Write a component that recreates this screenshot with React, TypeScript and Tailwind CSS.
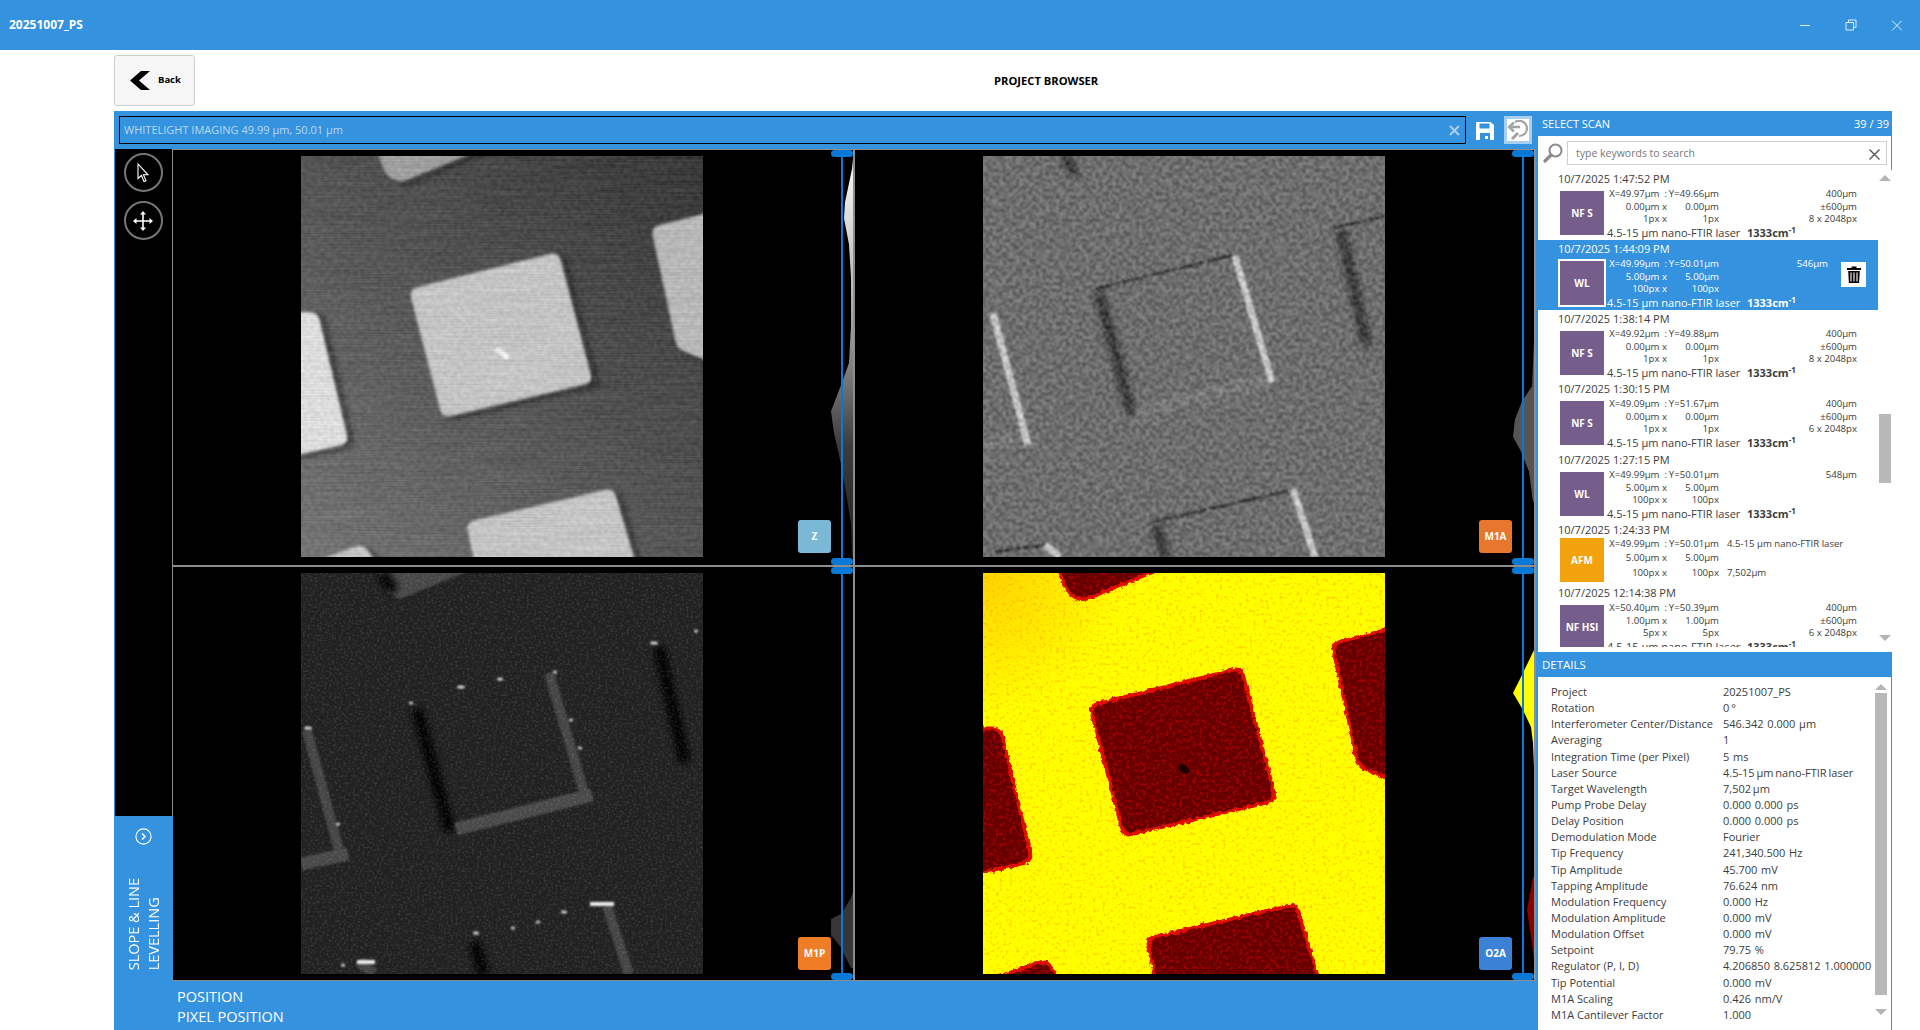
import React from 'react';

const FONT = "font-['Open_Sans','Noto_Sans',sans-serif]";

type Variant = 'z' | 'm1a' | 'm1p' | 'o2a';

// pillar outlines, in image pixels
const CENTER = '109,134 257,97 291,226 142,261';
const TOP = '74,-12 192,-12 99,26 86,19';
const RIGHT = '351,72 414,56 414,207 377,192';
const LEFT = '-12,157 16,157 47,287 -12,300';
const BOTTOM = '166,367 312,333 336,414 176,414';
const CORNER = '-8,414 62,389 80,414';
const ALL = [TOP, RIGHT, LEFT, BOTTOM, CORNER, CENTER];

type Edge = [number, number, number, number];

const DARK_EDGES: Edge[] = [
  [109, 136, 142, 259],
  [351, 74, 377, 190],
  [166, 369, 176, 401],
  [74, 0, 86, 19],
];
const TOP_EDGES: Edge[] = [
  [112, 133, 250, 99],
  [351, 72, 402, 60],
  [170, 366, 305, 335],
  [12, 396, 62, 389],
];
const BRIGHT_EDGES: Edge[] = [
  [252, 100, 289, 226],
  [10, 157, 45, 289],
  [310, 333, 332, 401],
  [62, 389, 77, 401],
];
const BOTTOM_EDGES: Edge[] = [
  [155, 256, 291, 222],
  [0, 291, 47, 281],
];

const DOTS: [number, number, number][] = [
  [160, 114, 4], [199, 106, 3], [110, 130, 2], [254, 99, 2], [270, 147, 2], [279, 175, 2],
  [353, 70, 4], [395, 58, 2], [7, 155, 4], [37, 251, 2], [263, 339, 3], [175, 360, 3],
  [42, 392, 2], [237, 349, 2], [212, 355, 2],
];

function Lines({ edges, color, width, dash }: { edges: Edge[]; color: string; width: number; dash?: string }) {
  return (
    <>
      {edges.map((e, i) => (
        <line key={i} x1={e[0]} y1={e[1]} x2={e[2]} y2={e[3]} stroke={color} strokeWidth={width} strokeDasharray={dash} />
      ))}
    </>
  );
}

function Noise({ id, freq, seed, matrix, soft = 0.6 }: { id: string; freq: string; seed: number; matrix: string; soft?: number }) {
  return (
    <filter id={id} x="0" y="0" width="100%" height="100%" colorInterpolationFilters="sRGB">
      <feTurbulence type="fractalNoise" baseFrequency={freq} numOctaves={3} seed={seed} />
      <feColorMatrix type="matrix" values={matrix} />
      <feGaussianBlur stdDeviation={soft} />
    </filter>
  );
}

function grayNoise(gain: number, alpha: number) {
  const g = gain;
  const o = (1 - gain) / 2;
  return `${g} 0 0 0 ${o} ${g} 0 0 0 ${o} ${g} 0 0 0 ${o} 0 0 0 0 ${alpha}`;
}

// microscope image drawn from the pillar outlines
function Sample({ variant }: { variant: Variant }) {
  const id = (n: string) => `${variant}-${n}`;
  return (
    <svg width="402" height="401" viewBox="0 0 402 401" className="block shrink-0">
      <defs>
        <linearGradient id={id('bg')} x1="1" y1="0" x2="0" y2="1">
          <stop offset="0" stopColor="#2d2d2d" />
          <stop offset="0.5" stopColor="#4f4f4f" />
          <stop offset="1" stopColor="#747474" />
        </linearGradient>
        <radialGradient id={id('tint')} cx="0" cy="0" r="0.35">
          <stop offset="0" stopColor="#ff9d00" stopOpacity="0.45" />
          <stop offset="1" stopColor="#ff9d00" stopOpacity="0" />
        </radialGradient>
        <filter id={id('b1')} x="-20%" y="-20%" width="140%" height="140%"><feGaussianBlur stdDeviation="1" /></filter>
        <filter id={id('b2')} x="-20%" y="-20%" width="140%" height="140%"><feGaussianBlur stdDeviation="2.6" /></filter>
        <filter id={id('b3')} x="-20%" y="-20%" width="140%" height="140%"><feGaussianBlur stdDeviation="3.5" /></filter>
        <filter id={id('round')} filterUnits="userSpaceOnUse" x="-30" y="-30" width="462" height="461" colorInterpolationFilters="sRGB">
          <feGaussianBlur stdDeviation="4" />
          <feComponentTransfer><feFuncA type="linear" slope="12" intercept="-5.5" /></feComponentTransfer>
          <feGaussianBlur stdDeviation="1.6" />
        </filter>
        <filter id={id('rough')} filterUnits="userSpaceOnUse" x="-30" y="-30" width="462" height="461" colorInterpolationFilters="sRGB">
          <feGaussianBlur stdDeviation="4" />
          <feComponentTransfer result="r"><feFuncA type="linear" slope="12" intercept="-5.5" /></feComponentTransfer>
          <feTurbulence type="fractalNoise" baseFrequency="0.22" numOctaves={2} seed={9} result="t" />
          <feDisplacementMap in="r" in2="t" scale="5" xChannelSelector="R" yChannelSelector="G" />
          <feGaussianBlur stdDeviation="0.6" />
        </filter>
        <Noise id={id('n')} freq="0.3" seed={7} matrix={grayNoise(3, 0.24)} soft={0.9} />
        <Noise id={id('s')} freq="0.012 0.7" seed={4} matrix={grayNoise(2.2, 0.05)} soft={0.2} />
        <Noise id={id('w')} freq="0.42" seed={3} matrix="0 0 0 0 1 0 0 0 0 1 0 0 0 0 1 3.2 0 0 0 -1.5" />
        <Noise id={id('o')} freq="0.3" seed={11} matrix="0 0 0 0 1 0 0 0 0 0.62 0 0 0 0 0 5 0 0 0 -2.75" />
        <Noise id={id('r')} freq="0.3" seed={5} matrix="0 0 0 0 0.9 0 0 0 0 0 0 0 0 0 0 5 0 0 0 -2.5" />
        <clipPath id={id('c')}>
          {ALL.map((p, i) => <polygon key={i} points={p} />)}
        </clipPath>
      </defs>

      {variant === 'z' && (
        <>
          <rect width="402" height="401" fill={`url(#${id('bg')})`} />
          <g filter={`url(#${id('b3')})`}>
            {ALL.map((p, i) => <polygon key={i} points={p} fill="#0c0c0c" opacity="0.7" transform="translate(6 3)" />)}
          </g>
          <g filter={`url(#${id('round')})`}>
            {ALL.map((p, i) => {
              const c = p === LEFT ? '#ececec' : p === TOP ? '#a4a4a4' : p === RIGHT ? '#c2c2c2' : '#d0d0d0';
              return <polygon key={i} points={p} fill={c} stroke={c} strokeWidth="2" strokeLinejoin="round" />;
            })}
          </g>
          <line x1="195" y1="192" x2="207" y2="202" stroke="#fff" strokeWidth="5" filter={`url(#${id('b1')})`} />
          <rect width="402" height="401" filter={`url(#${id('n')})`} opacity="0.4" />
          <rect width="402" height="401" filter={`url(#${id('s')})`} />
        </>
      )}

      {variant === 'm1a' && (
        <>
          <rect width="402" height="401" fill="#696969" />
          <g filter={`url(#${id('b3')})`}>
            <g transform="translate(7 0)"><Lines edges={DARK_EDGES} color="#1c1c1c" width={10} /></g>
            <Lines edges={BOTTOM_EDGES} color="#8c8c8c" width={7} dash="12 8" />
          </g>
          <g filter={`url(#${id('b1')})`}>
            <Lines edges={TOP_EDGES} color="#1a1a1a" width={2.5} dash="26 3" />
            <Lines edges={BRIGHT_EDGES} color="#dadada" width={7} />
          </g>
          <rect width="402" height="401" filter={`url(#${id('n')})`} />
        </>
      )}

      {variant === 'm1p' && (
        <>
          <rect width="402" height="401" fill="#212121" />
          <g filter={`url(#${id('b1')})`}>
            <polygon points={TOP} fill="#474747" />
          </g>
          <g filter={`url(#${id('b3')})`}>
            <g transform="translate(7 0)"><Lines edges={DARK_EDGES} color="#000" width={12} /></g>
          </g>
          <g filter={`url(#${id('b1')})`}>
            <g transform="translate(-4 0)"><Lines edges={BRIGHT_EDGES} color="#444" width={10} /></g>
            <Lines edges={BOTTOM_EDGES} color="#4a4a4a" width={13} />
          </g>
          <rect width="402" height="401" filter={`url(#${id('w')})`} opacity="0.1" />
          <g filter="blur(0.9px)">
            {DOTS.map((d, i) => <ellipse key={i} cx={d[0]} cy={d[1]} rx={d[2]} ry="1.6" fill="#dedede" />)}
            <rect x="289" y="329" width="24" height="4" fill="#f0f0f0" />
            <rect x="56" y="387" width="18" height="4" fill="#f0f0f0" />
          </g>
        </>
      )}

      {variant === 'o2a' && (
        <>
          <rect width="402" height="401" fill="#ffff00" />
          <rect width="402" height="401" fill={`url(#${id('tint')})`} />
          <rect width="402" height="401" filter={`url(#${id('o')})`} opacity="0.4" />
          <g filter={`url(#${id('rough')})`}>
            {ALL.map((p, i) => <polygon key={i} points={p} fill="#e01000" stroke="#e01000" strokeWidth="7" strokeLinejoin="round" />)}
          </g>
          <g filter={`url(#${id('rough')})`}>
            {ALL.map((p, i) => <polygon key={i} points={p} fill="#640000" />)}
          </g>
          <g clipPath={`url(#${id('c')})`}>
            <rect width="402" height="401" filter={`url(#${id('r')})`} opacity="0.45" />
          </g>
          <ellipse cx="201" cy="196" rx="6" ry="4" fill="#1c0000" transform="rotate(35 201 196)" />
        </>
      )}
    </svg>
  );
}

// the height histogram at the right edge of every image
function Profile({ variant }: { variant: Variant }) {
  const gid = `${variant}-hist`;
  return (
    <svg className="absolute right-0 top-0 h-full w-[24px]" viewBox="0 0 24 413" preserveAspectRatio="none">
      <defs>
        <linearGradient id={gid} x1="0" y1="0" x2="0" y2="1">
          <stop offset="0.05" stopColor="#f0f0f0" />
          <stop offset="0.32" stopColor="#bbb" />
          <stop offset="0.55" stopColor="#777" />
          <stop offset="0.72" stopColor="#3c3c3c" />
          <stop offset="1" stopColor="#202020" />
        </linearGradient>
      </defs>
      {variant === 'z' && (
        <polygon fill={`url(#${gid})`} points="24,9 23,19 16,52 15,68 20,94 22,127 22,175 20,212 12,234 2,260 5,282 10,303 17,341 22,373 23,405 24,405" />
      )}
      {variant === 'm1a' && (
        <polygon fill="#555" points="24,190 22,235 12,250 5,268 3,285 11,300 19,320 23,350 24,350" />
      )}
      {variant === 'm1p' && (
        <polygon fill="#363636" points="24,325 22,331 12,347 2,352 2,368 11,379 22,401 24,401" />
      )}
      {variant === 'o2a' && (
        <>
          <polygon fill="#ffff00" points="24,83 11,110 3,126 13,143 21,160 23,176 24,200" />
          <polygon fill="#8b0000" points="24,310 23,310 17,343 21,370 24,393" />
        </>
      )}
    </svg>
  );
}

function Cell({ variant, label, badgeColor, bottomClass, cellClass }: { variant: Variant; label: string; badgeColor: string; bottomClass: string; cellClass: string }) {
  return (
    <div className={`relative bg-black pl-[128px] pt-[6px] ${cellClass}`}>
      <Sample variant={variant} />
      <Profile variant={variant} />
      <div className="absolute right-[10px] top-0 h-full w-[2px] bg-[#0a78d7]" />
      <div className="absolute right-0 top-0 h-[7px] w-[22px] rounded-full bg-[#0a78d7]" />
      <div className="absolute bottom-0 right-0 h-[7px] w-[22px] rounded-full bg-[#0a78d7]" />
      <div className={`absolute right-[22px] flex h-[33px] w-[33px] items-center justify-center rounded-[3px] text-[10px] font-bold text-white ${bottomClass} ${badgeColor}`}>
        {label}
      </div>
    </div>
  );
}

type Scan = {
  date: string;
  kind: string;
  x: string;
  y: string;
  w: string;
  h: string;
  pw: string;
  ph: string;
  right: string[];
  selected?: boolean;
  tall?: boolean;
};

const SCANS: Scan[] = [
  { date: '10/7/2025 1:47:52 PM', kind: 'NF S', x: '49.97', y: '49.66', w: '0.00µm', h: '0.00µm', pw: '1px', ph: '1px', right: ['400µm', '±600µm', '8 x 2048px'] },
  { date: '10/7/2025 1:44:09 PM', kind: 'WL', x: '49.99', y: '50.01', w: '5.00µm', h: '5.00µm', pw: '100px', ph: '100px', right: ['546µm'], selected: true },
  { date: '10/7/2025 1:38:14 PM', kind: 'NF S', x: '49.92', y: '49.88', w: '0.00µm', h: '0.00µm', pw: '1px', ph: '1px', right: ['400µm', '±600µm', '8 x 2048px'] },
  { date: '10/7/2025 1:30:15 PM', kind: 'NF S', x: '49.09', y: '51.67', w: '0.00µm', h: '0.00µm', pw: '1px', ph: '1px', right: ['400µm', '±600µm', '6 x 2048px'], tall: true },
  { date: '10/7/2025 1:27:15 PM', kind: 'WL', x: '49.99', y: '50.01', w: '5.00µm', h: '5.00µm', pw: '100px', ph: '100px', right: ['548µm'] },
];

function TrashIcon() {
  return (
    <svg width="14" height="17" viewBox="0 0 14 17">
      <path d="M4.5 2V.6h5V2H14v2H0V2zM1.2 5h11.6l-.7 12H1.9z" fill="#000" />
      <path d="M4 6.5v9M7 6.5v9M10 6.5v9" stroke="#fff" strokeWidth="1.1" />
    </svg>
  );
}

function ScanRow({ scan }: { scan: Scan }) {
  const on = scan.selected;
  return (
    <div className={`w-[340px] ${scan.tall ? 'h-[71px]' : 'h-[70px]'} ${on ? 'bg-[#3592de] text-white' : 'text-[#3c3c3c]'}`}>
      <div className="h-[16px] pl-[20px] text-[11px] leading-[17px]">{scan.date}</div>
      <div className="flex pl-[22px]">
        <div className={`mt-[5px] flex h-[44px] w-[44px] shrink-0 items-center justify-center bg-[#755e8b] text-[10px] font-bold text-white ${on ? 'outline-2 outline-white' : ''}`}>
          {scan.kind}
        </div>
        <div className="ml-[6px] mt-[2px]">
          <div className="flex">
            <div className="w-[109px] text-[9.6px] leading-[12.5px]">
              <div className="grid grid-cols-[57px_52px] text-right">
                <span className="justify-self-end whitespace-nowrap">X={scan.x}µm&nbsp; :</span>
                <span className="whitespace-nowrap">Y={scan.y}µm</span>
                <span>{scan.w} x</span>
                <span>{scan.h}</span>
                <span>{scan.pw} x</span>
                <span>{scan.ph}</span>
              </div>
            </div>
            <div className={`text-right text-[9.6px] leading-[12.5px] ${on ? 'w-[109px]' : 'w-[138px]'}`}>
              {scan.right.map(r => <div key={r}>{r}</div>)}
            </div>
            {on && (
              <div className="ml-[13px] mt-[4px] flex h-[25px] w-[25px] items-center justify-center bg-white">
                <TrashIcon />
              </div>
            )}
          </div>
          <div className="ml-[-3px] flex h-[14px] items-center whitespace-nowrap text-[11px] leading-[14px]">
            <span className="w-[140px]">4.5-15 µm nano-FTIR laser</span>
            <span className="font-bold">1333cm<sup className="text-[8px]">-1</sup></span>
          </div>
        </div>
      </div>
    </div>
  );
}

function AfmRow() {
  return (
    <div className="h-[63px] w-[340px] text-[#3c3c3c]">
      <div className="h-[16px] pl-[20px] text-[11px] leading-[17px]">10/7/2025 1:24:33 PM</div>
      <div className="flex pl-[22px]">
        <div className="mt-[1px] flex h-[44px] w-[44px] items-center justify-center bg-[#f2a20c] text-[10px] font-bold text-white">AFM</div>
        <div className="ml-[6px] mt-[1px] grid grid-cols-[57px_52px_auto] grid-rows-[12px_16px_15px] items-center text-[9.6px]">
          <span className="justify-self-end whitespace-nowrap">X=49.99µm&nbsp; :</span>
          <span className="whitespace-nowrap text-right">Y=50.01µm</span>
          <span className="whitespace-nowrap pl-[8px]">4.5-15 µm nano-FTIR laser</span>
          <span className="text-right">5.00µm x</span>
          <span className="text-right">5.00µm</span>
          <span />
          <span className="text-right">100px x</span>
          <span className="text-right">100px</span>
          <span className="pl-[8px]">7,502µm</span>
        </div>
      </div>
    </div>
  );
}

const LAST: Scan = { date: '10/7/2025 12:14:38 PM', kind: 'NF HSI', x: '50.40', y: '50.39', w: '1.00µm', h: '1.00µm', pw: '5px', ph: '5px', right: ['400µm', '±600µm', '6 x 2048px'] };

const DETAILS: [string, string][] = [
  ['Project', '20251007_PS'],
  ['Rotation', '0 °'],
  ['Interferometer Center/Distance', '546.342  0.000  µm'],
  ['Averaging', '1'],
  ['Integration Time (per Pixel)', '5  ms'],
  ['Laser Source', '4.5-15 µm nano-FTIR laser'],
  ['Target Wavelength', '7,502 µm'],
  ['Pump Probe Delay', '0.000  0.000  ps'],
  ['Delay Position', '0.000  0.000  ps'],
  ['Demodulation Mode', 'Fourier'],
  ['Tip Frequency', '241,340.500  Hz'],
  ['Tip Amplitude', '45.700  mV'],
  ['Tapping Amplitude', '76.624  nm'],
  ['Modulation Frequency', '0.000  Hz'],
  ['Modulation Amplitude', '0.000  mV'],
  ['Modulation Offset', '0.000  mV'],
  ['Setpoint', '79.75  %'],
  ['Regulator (P, I, D)', '4.206850  8.625812  1.000000'],
  ['Tip Potential', '0.000  mV'],
  ['M1A Scaling', '0.426  nm/V'],
  ['M1A Cantilever Factor', '1.000'],
];

function Arrow({ down }: { down?: boolean }) {
  return (
    <svg width="12" height="6" viewBox="0 0 12 6" className="block">
      <polygon points={down ? '0,0 12,0 6,6' : '0,6 12,6 6,0'} fill="#b4b4b4" />
    </svg>
  );
}

export default function App() {
  return (
    <div className={`flex h-[1030px] w-[1920px] flex-col overflow-hidden bg-white ${FONT}`}>
      {/* Title bar */}
      <div className="flex h-[50px] shrink-0 items-center bg-[#3592de] pl-[9px] text-white">
        <span className="w-[1789px] text-[12px] font-bold">20251007_PS</span>
        <svg width="104" height="12" viewBox="0 0 104 12" fill="none" stroke="#d9ebfa" strokeWidth="1">
          <path d="M2 6.5h10" />
          <path d="M48 3.5h7.5v7.5H48zM50.5 3.5V1H58v7.5h-2.5" />
          <path d="M94 1.5l10 10M104 1.5l-10 10" />
        </svg>
      </div>

      {/* Back row */}
      <div className="flex h-[61px] shrink-0 items-start pl-[114px] pt-[5px]">
        <button className="flex h-[51px] w-[81px] items-center rounded-[3px] border border-[#cfcfcf] bg-[#f6f6f6] pl-[15px]">
          <svg width="20" height="19" viewBox="0 0 20 19"><path d="M20 0H11L0 9.5 11 19h9L9 9.5z" fill="#000" /></svg>
          <span className="ml-[8px] text-[9.5px] font-bold text-black">Back</span>
        </button>
        <div className="ml-[799px] mt-[21px] text-[11.2px] font-bold leading-[10px] text-black">PROJECT BROWSER</div>
      </div>

      <div className="flex h-[919px] shrink-0 pl-[114px]">
        {/* Viewer column */}
        <div className="flex w-[1424px] shrink-0 flex-col bg-[#3592de]">
          <div className="flex h-[38px] shrink-0 items-start pl-[5px] pt-[5px]">
            <div className="flex h-[28px] w-[1347px] items-center justify-between border border-black pl-[4px] pr-[5px] text-[11px] text-[#b8daf5]">
              <span className="pt-[1px]">WHITELIGHT IMAGING 49.99 µm, 50.01 µm</span>
              <svg width="11" height="11" viewBox="0 0 11 11" stroke="#a9d0ef" strokeWidth="2"><path d="M1 1l9 9M10 1l-9 9" /></svg>
            </div>
            <svg className="ml-[10px] mt-[6px]" width="18" height="18" viewBox="0 0 18 18">
              <path fillRule="evenodd" d="M0 0h14.5L18 3v15H0zM3.5 1.5v5h10v-5zM4 11v7h10v-7zM9 14h3v3H9z" fill="#fff" />
            </svg>
            <div className="ml-[10px] flex h-[28px] w-[28px] items-center justify-center border-[3px] border-[#a9cff0] bg-white">
              <svg width="22" height="20" viewBox="0 0 22 20" fill="none" stroke="#a3a3a3">
                <path d="M4 7h9" strokeWidth="2.6" />
                <path d="M7 2.5L2 7l5 4.5" strokeWidth="2.4" />
                <path d="M8 2.2A7.6 7.6 0 1 1 12 16" strokeWidth="2.2" />
                <path d="M11 13l-6 6" strokeWidth="3" />
              </svg>
            </div>
          </div>

          <div className="flex h-[832px] shrink-0">
            {/* Tools strip */}
            <div className="flex w-[59px] shrink-0 flex-col">
              <div className="ml-[1px] flex h-[667px] flex-col items-center gap-[9px] border-r border-[#8d8d8d] bg-black pr-[1px] pt-[4px]">
                <div className="flex h-[39px] w-[39px] items-center justify-center rounded-full border-2 border-[#777]">
                  <svg width="12" height="20" viewBox="0 0 12 20"><path d="M1 1v14.5l3.4-3 2.6 6 2-.9-2.6-5.8H11z" fill="#000" stroke="#fff" strokeWidth="1.1" /></svg>
                </div>
                <div className="flex h-[39px] w-[39px] items-center justify-center rounded-full border-2 border-[#777]">
                  <svg width="20" height="20" viewBox="0 0 20 20"><path d="M10 2v16M2 10h16" stroke="#fff" strokeWidth="1.6" /><path d="M10 0l3 3.5H7zM10 20l3-3.5H7zM0 10l3.5-3v6zM20 10l-3.5-3v6z" fill="#fff" /></svg>
                </div>
              </div>
              <div className="flex flex-1 flex-col items-center pt-[12px] text-white">
                <svg width="17" height="17" viewBox="0 0 17 17" fill="none" stroke="#fff">
                  <circle cx="8.5" cy="8.5" r="7.6" strokeWidth="1.1" />
                  <path d="M7 5.5l3 3-3 3" strokeWidth="1.6" />
                </svg>
                <div className="mt-[33px] rotate-180 text-[14.5px] leading-[20px] [writing-mode:vertical-rl]">
                  <div>SLOPE &amp; LINE</div>
                  <div>LEVELLING</div>
                </div>
              </div>
            </div>

            {/* Four image panes */}
            <div className="h-[832px] w-[1363px] shrink-0 border-y border-[#8d8d8d] bg-black">
              <div className="flex h-[415px]">
                <Cell variant="z" label="Z" badgeColor="bg-[#7ab8d6]" bottomClass="bottom-[12px]" cellClass="w-[682px] border-r-2 border-[#8d8d8d]" />
                <Cell variant="m1a" label="M1A" badgeColor="bg-[#e8762c]" bottomClass="bottom-[12px]" cellClass="w-[681px] border-r-2 border-[#8d8d8d]" />
              </div>
              <div className="h-[2px] bg-[#8d8d8d]" />
              <div className="flex h-[413px]">
                <Cell variant="m1p" label="M1P" badgeColor="bg-[#ee7d26]" bottomClass="bottom-[10px]" cellClass="w-[682px] border-r-2 border-[#8d8d8d]" />
                <Cell variant="o2a" label="O2A" badgeColor="bg-[#3b82d6]" bottomClass="bottom-[10px]" cellClass="w-[681px] border-r-2 border-[#8d8d8d]" />
              </div>
            </div>
          </div>

          <div className="pl-[63px] pt-[6px] text-[14.5px] leading-[20px] text-white">
            <div>POSITION</div>
            <div>PIXEL POSITION</div>
          </div>
        </div>

        {/* Right column */}
        <div className="flex w-[354px] shrink-0 flex-col">
          <div className="flex h-[25px] shrink-0 items-center justify-between bg-[#3592de] pl-[4px] pr-[3px] pt-[1px] text-[11px] text-white">
            <span>SELECT SCAN</span>
            <span>39 / 39</span>
          </div>
          <div className="flex h-[34px] shrink-0 items-start border-r border-[#3592de] pl-[5px] pt-[5px]">
            <svg className="mt-[2px]" width="20" height="20" viewBox="0 0 20 20" fill="none" stroke="#8a8a8a">
              <circle cx="12.5" cy="7.5" r="6" strokeWidth="2" />
              <path d="M8 12l-6 6" strokeWidth="3.2" strokeLinecap="round" />
            </svg>
            <div className="ml-[4px] flex h-[24px] w-[320px] items-center justify-between border border-[#cfcfcf] pl-[8px] pr-[6px] pt-[2px] text-[10.5px] text-[#777]">
              <span>type keywords to search</span>
              <svg width="11" height="11" viewBox="0 0 11 11" stroke="#555" strokeWidth="1.4"><path d="M.5.5l10 10M10.5.5l-10 10" /></svg>
            </div>
          </div>

          <div className="flex h-[477px] shrink-0 overflow-hidden">
            <div className="w-[340px] shrink-0">
              <ScanRow scan={SCANS[0]} />
              <ScanRow scan={SCANS[1]} />
              <ScanRow scan={SCANS[2]} />
              <ScanRow scan={SCANS[3]} />
              <ScanRow scan={SCANS[4]} />
              <AfmRow />
              <ScanRow scan={LAST} />
            </div>
            <div className="flex w-[14px] flex-col items-center pt-[5px]">
              <Arrow />
              <div className="mt-[233px] h-[69px] w-[12px] shrink-0 bg-[#b8b8b8]" />
              <div className="mt-[152px]"><Arrow down /></div>
            </div>
          </div>

          <div className="h-[5px] shrink-0" />
          <div className="flex h-[25px] shrink-0 items-center bg-[#3592de] pl-[4px] pt-[1px] text-[11.5px] text-white">DETAILS</div>
          <div className="flex flex-1 border-r border-[#3592de] pt-[6.5px]">
            <div className="w-[337px] shrink-0 pl-[13px] text-[11px] text-[#3c3c3c] [word-spacing:-1px]">
              {DETAILS.map(([k, v]) => (
                <div key={k} className="flex h-[16.15px] items-center whitespace-pre leading-none">
                  <span className="w-[172px] shrink-0 [word-spacing:0]">{k}</span>
                  <span>{v}</span>
                </div>
              ))}
            </div>
            <div className="flex w-[12px] flex-col items-center">
              <Arrow />
              <div className="mt-[3px] h-[302px] w-[12px] shrink-0 bg-[#b8b8b8]" />
              <div className="mt-[14px]"><Arrow down /></div>
            </div>
          </div>
        </div>
      </div>
    </div>
  );
}
